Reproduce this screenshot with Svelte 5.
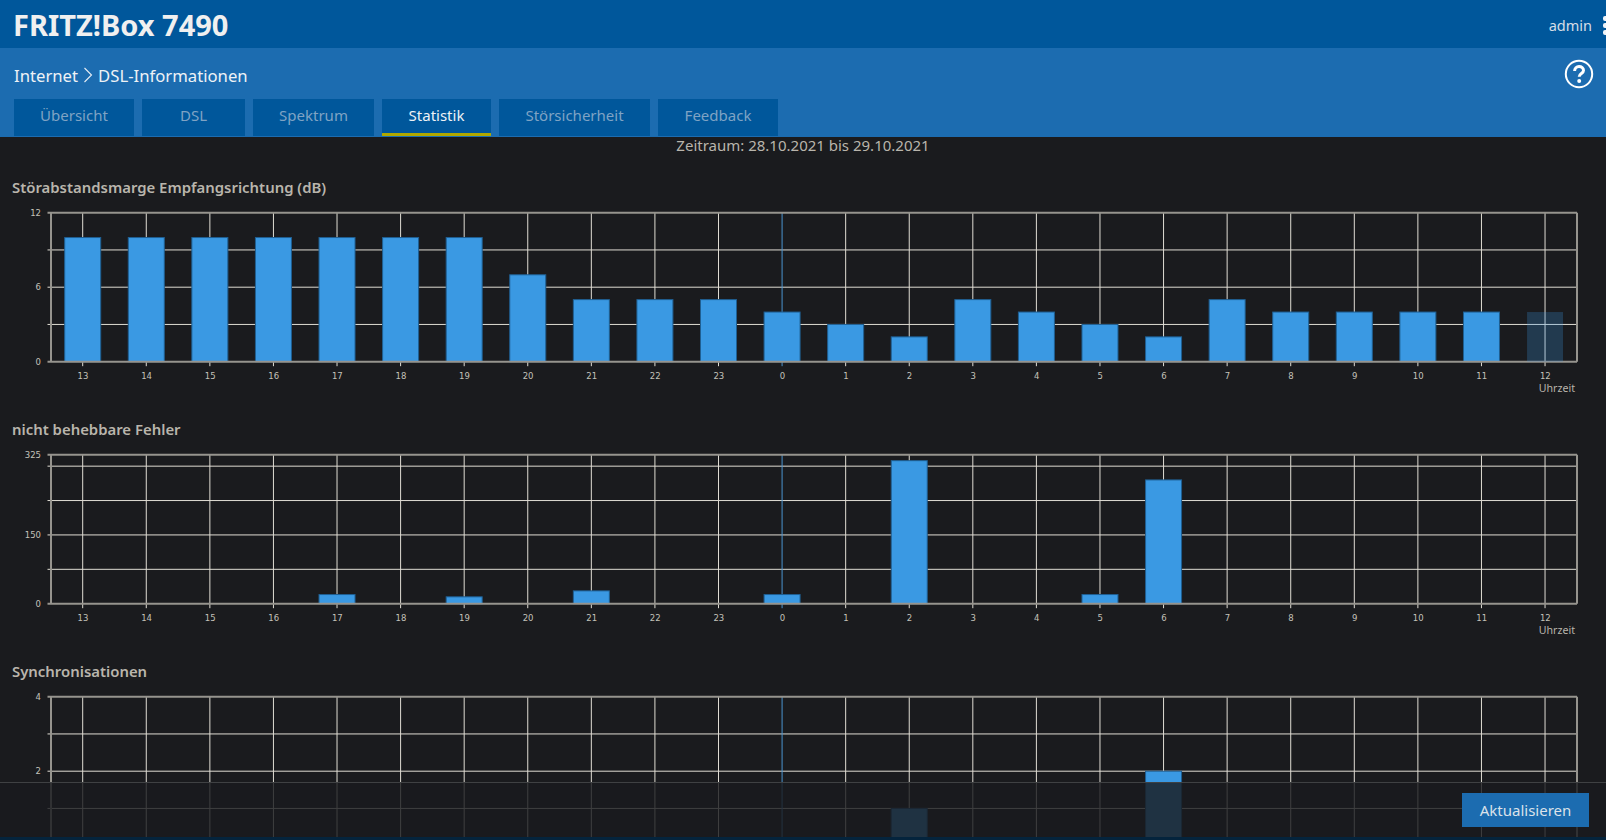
<script>
  const hours = [13,14,15,16,17,18,19,20,21,22,23,0,1,2,3,4,5,6,7,8,9,10,11,12];
  const X0 = 82.7, STEP = 63.58, W = 36;
  const xAt = (i) => X0 + i * STEP;
  const LEFT = 51, RIGHT = 1577, TOP = 12.7, H = 149;

  const charts = [
    {
      title: 'Störabstandsmarge Empfangsrichtung (dB)',
      max: 12,
      grid: [3, 6, 9],
      labels: [12, 6, 0],
      bars: [10,10,10,10,10,10,10,7,5,5,5,4,3,2,5,4,3,2,5,4,4,4,4,4],
      dim: [23],
      axis: true
    },
    {
      title: 'nicht behebbare Fehler',
      max: 325,
      grid: [75, 150, 225, 300],
      labels: [325, 150, 0],
      bars: [0,0,0,0,20,0,15,0,28,0,0,20,0,312,0,0,20,270,0,0,0,0,0,0],
      dim: [],
      axis: true
    },
    {
      title: 'Synchronisationen',
      max: 4,
      grid: [1, 2, 3],
      labels: [4, 2],
      bars: [0,0,0,0,0,0,0,0,0,0,0,0,0,1,0,0,0,2,0,0,0,0,0,0],
      dim: [],
      axis: false
    }
  ];
  const tabs = [
    { label: 'Übersicht', width: 120 },
    { label: 'DSL', width: 103 },
    { label: 'Spektrum', width: 121 },
    { label: 'Statistik', width: 109 },
    { label: 'Störsicherheit', width: 151 },
    { label: 'Feedback', width: 120 }
  ];
  const yAt = (c, v) => TOP + H - (v / c.max) * H;
</script>

<div class="page">
  <header class="top">
    <h1>FRITZ!Box 7490</h1>
    <div class="user">
      <span class="name">admin</span>
      <span class="dots"><i></i><i></i><i></i></span>
    </div>
  </header>

  <div class="sub">
    <div class="crumbs">
      <div class="path">
        <span>Internet</span>
        <svg class="chev" width="10" height="16" viewBox="0 0 10 16"><path d="M1.5 1 L8.5 8 L1.5 15" fill="none" stroke="#e6edf4" stroke-width="1.1"/></svg>
        <span>DSL-Informationen</span>
      </div>
      <svg class="help" width="30" height="30" viewBox="0 0 30 30">
        <circle cx="15" cy="15" r="13.2" fill="none" stroke="#fff" stroke-width="2"/>
        <path d="M10.6 12 C10.6 9.2 12.5 7.6 15 7.6 C17.6 7.6 19.5 9.2 19.5 11.6 C19.5 14.6 15.2 14.6 15.2 17.8" fill="none" stroke="#fff" stroke-width="3"/>
        <circle cx="15.2" cy="22" r="2" fill="#fff"/>
      </svg>
    </div>
    <nav class="tabs">
      {#each tabs as t}
        <div class="tab" class:active={t.label === 'Statistik'} style="width: {t.width}px">{t.label}</div>
      {/each}
    </nav>
  </div>

  <div class="period">Zeitraum: 28.10.2021 bis 29.10.2021</div>

  <main>
    {#each charts as c}
      <section>
        <h2>{c.title}</h2>
        <svg class="chart" width="1606" height="218" viewBox="0 0 1606 218">
          {#each c.grid as g}
            <line class="g" x1="47.5" x2={RIGHT} y1={yAt(c, g)} y2={yAt(c, g)} />
          {/each}
          {#each hours as h, i}
            <line class="g" class:now={h === 0} x1={xAt(i)} x2={xAt(i)} y1={TOP} y2={TOP + H + 4.5} />
          {/each}
          <line class="b" x1={LEFT} x2={LEFT} y1={TOP} y2={TOP + H} />
          <line class="b" x1={RIGHT} x2={RIGHT} y1={TOP} y2={TOP + H} />
          {#each hours as h, i}
            {#if c.bars[i] > 0 && !c.dim.includes(i)}
              <rect class="bar" x={xAt(i) - W / 2} y={yAt(c, c.bars[i])} width={W} height={(c.bars[i] / c.max) * H} />
            {/if}
          {/each}
          <line class="b" x1="47.5" x2={RIGHT} y1={TOP} y2={TOP} />
          <line class="b" x1="47.5" x2={RIGHT} y1={TOP + H} y2={TOP + H} />
          {#each hours as h, i}
            {#if c.dim.includes(i)}
              <rect class="bar faded" x={xAt(i) - W / 2} y={yAt(c, c.bars[i])} width={W} height={(c.bars[i] / c.max) * H} />
            {/if}
          {/each}
          {#each c.labels as l}
            <text class="yl" x="41" y={yAt(c, l) + 3}>{l}</text>
          {/each}
          {#if c.axis}
            {#each hours as h, i}
              <text class="xl" x={xAt(i) + 0.3} y={TOP + H + 17.4}>{h}</text>
            {/each}
            <text class="unit" x="1575" y={TOP + H + 30}>Uhrzeit</text>
          {/if}
        </svg>
      </section>
    {/each}
  </main>

  <footer>
    <button>Aktualisieren</button>
  </footer>
</div>

<style>
  :global(body) {
    margin: 0;
    background: #1a1b1e;
  }
  .page {
    position: relative;
    width: 1606px;
    height: 840px;
    overflow: hidden;
    background: #1a1b1e;
    font-family: "Noto Sans", "Open Sans", sans-serif;
    color: #b9b5ac;
  }
  .top {
    height: 48px;
    background: #00579b;
    display: flex;
    align-items: center;
    justify-content: space-between;
    padding-left: 13px;
    box-sizing: border-box;
  }
  h1 {
    margin: 0;
    font-size: 29px;
    font-weight: 700;
    color: #f0f0f0;
  }
  .user {
    display: flex;
    align-items: center;
    gap: 11px;
    color: #d5dde6;
    font-size: 14.5px;
    margin-right: -3px;
  }
  .name {
    padding-top: 2px;
  }
  .dots {
    display: flex;
    flex-direction: column;
    gap: 2px;
    width: 6px;
    padding-top: 2px;
  }
  .dots i {
    display: block;
    width: 6px;
    height: 5px;
    border-radius: 2px;
    background: #f2f5f8;
  }
  .sub {
    height: 89px;
    background: #1c6cb0;
    box-sizing: border-box;
    padding: 0 12px 0 14px;
    display: flex;
    flex-direction: column;
  }
  .crumbs {
    height: 51px;
    display: flex;
    align-items: center;
    justify-content: space-between;
  }
  .path {
    display: flex;
    align-items: center;
    gap: 5px;
    font-size: 16.7px;
    color: #eef2f6;
    padding-top: 3px;
  }
  .tabs {
    display: flex;
    gap: 8px;
  }
  .tab {
    height: 37px;
    padding-bottom: 5px;
    box-sizing: border-box;
    background: #00579b;
    color: #7fa3c4;
    font-size: 15px;
    display: flex;
    align-items: center;
    justify-content: center;
  }
  .tab.active {
    color: #eef2f6;
    padding-bottom: 2px;
    border-bottom: 3px solid #b0a800;
    box-shadow: inset 0 -1px 0 #00579b;
  }
  .period {
    text-align: center;
    font-size: 15px;
    line-height: 16px;
    height: 38px;
    box-sizing: border-box;
  }
  section {
    height: 242px;
  }
  h2 {
    margin: 0;
    padding-left: 12px;
    font-size: 14.9px;
    font-weight: 600;
    line-height: 25px;
    color: #b9b5ac;
  }
  .chart {
    display: block;
    overflow: visible;
  }
  .g {
    stroke: #e0ddd4;
    stroke-width: 1;
  }
  .g.now {
    stroke: #4a94d0;
  }
  .b {
    stroke: #96948e;
    stroke-width: 2;
  }
  .bar {
    fill: #3a99e3;
    stroke: #1f5f92;
    stroke-width: 1;
  }
  .bar.faded {
    fill: #3a99e3;
    fill-opacity: 0.25;
    stroke: none;
  }
  text {
    font-family: "DejaVu Sans", sans-serif;
    font-size: 8.5px;
    fill: #c4c2ba;
  }
  .yl {
    text-anchor: end;
  }
  .xl {
    text-anchor: middle;
  }
  .unit {
    font-family: "Noto Sans", sans-serif;
    font-size: 10.6px;
    text-anchor: end;
    fill: #b9b5ac;
  }
  footer {
    position: absolute;
    left: 0;
    right: 0;
    bottom: 0;
    height: 58px;
    box-sizing: border-box;
    background: rgba(26, 27, 30, 0.82);
    border-top: 1px solid #3f4143;
    border-bottom: 3px solid #04243d;
    display: flex;
    justify-content: flex-end;
    align-items: flex-start;
    padding: 10px 17px 0 0;
  }
  button {
    width: 127px;
    height: 34px;
    border: none;
    background: #1c6cb0;
    color: #dbe2ea;
    font-family: "Noto Sans", sans-serif;
    font-size: 15px;
  }
</style>
